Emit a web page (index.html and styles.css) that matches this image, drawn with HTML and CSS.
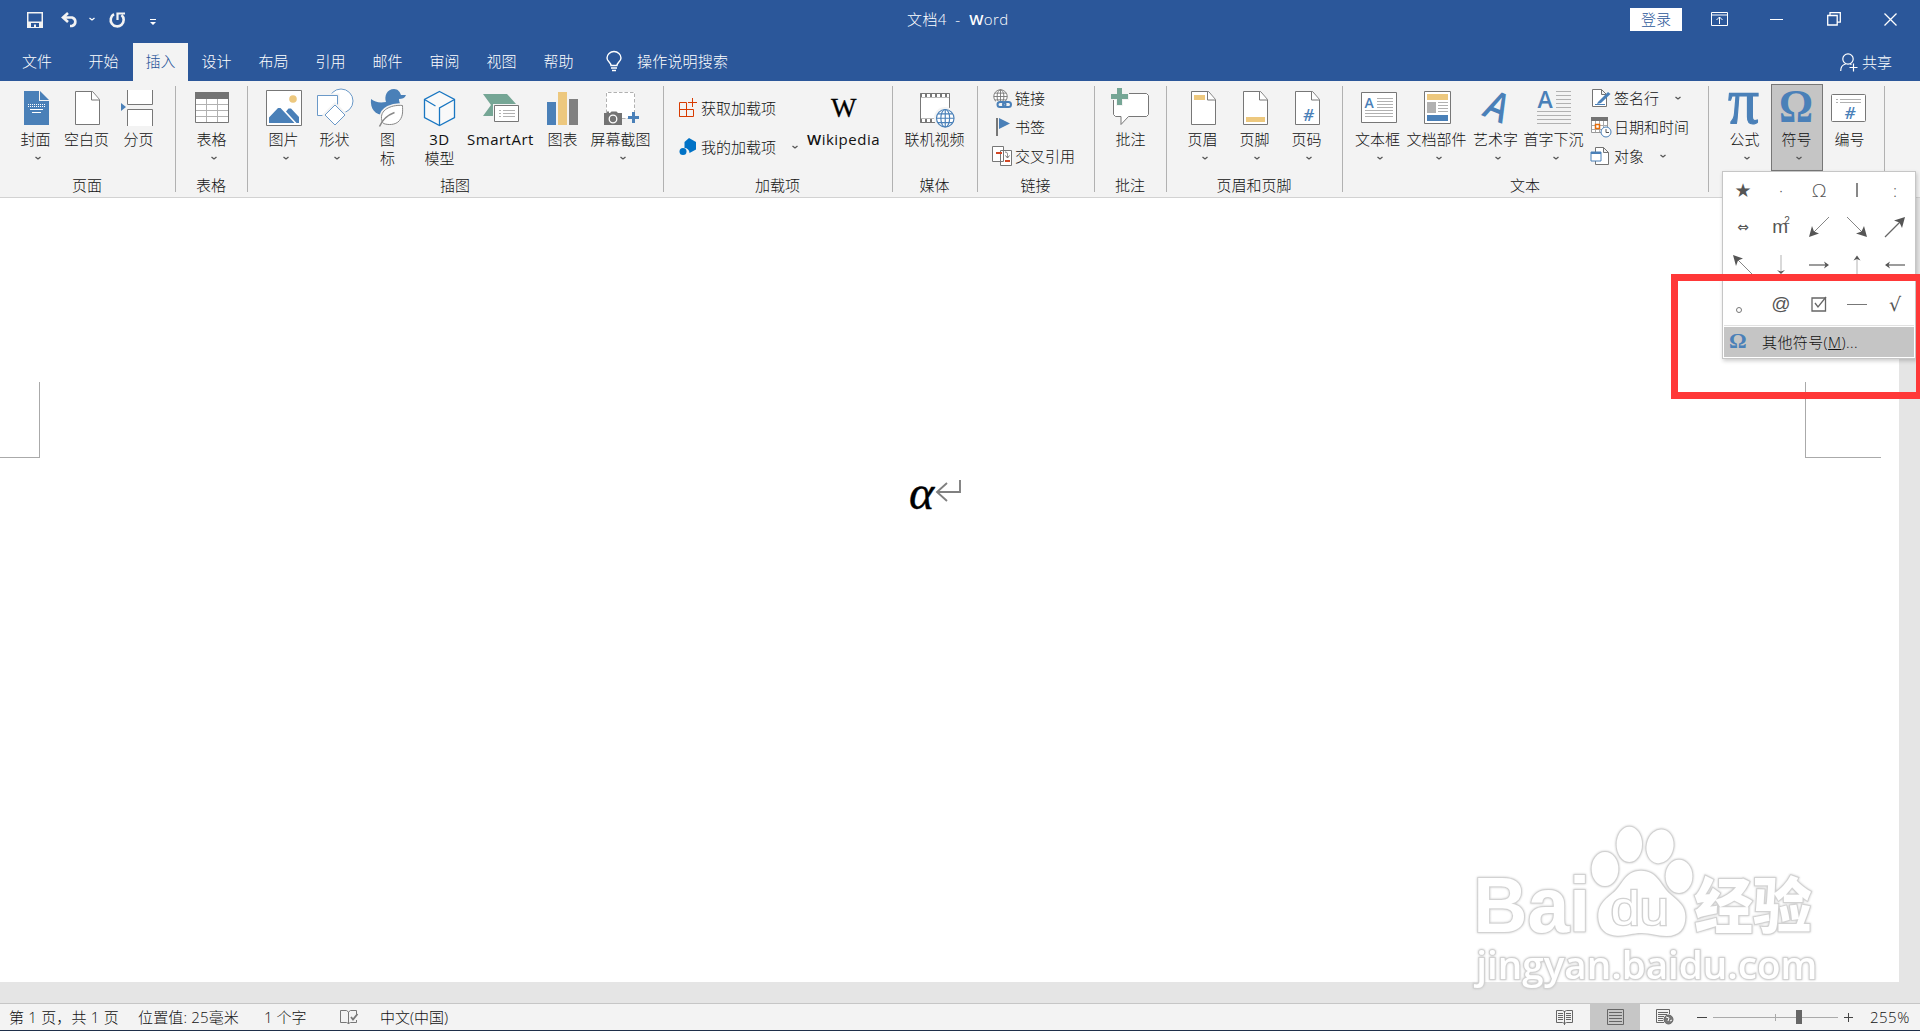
FILE: index.html
```html
<!DOCTYPE html>
<html lang="zh-CN">
<head>
    <meta charset="UTF-8">
    <meta name="viewport" content="width=device-width, initial-scale=1.0">
    <title>文档4 - Word</title>
    <link rel="stylesheet" href="styles.css">
</head>
<body>
    <!-- shared shapes -->
    <svg class="defs">
        <symbol id="chev" viewBox="0 0 8 5"><path d="M1.500 1l2.500 2L6.500 1" fill="none" stroke="currentColor" stroke-width="1.300"/></symbol>
        <symbol id="page" viewBox="0 0 40 42"><path d="M8.500 3.500h17l7 8v25h-24z" fill="#fff" stroke="#777"/><path d="M24.500 3.500v8.500h8" fill="#fff" stroke="#777"/></symbol>
        <symbol id="globe" viewBox="0 0 20 20"><circle cx="10" cy="10" r="9" fill="#fff"/><g fill="none" stroke="currentColor" stroke-width="1.2"><circle cx="10" cy="10" r="9"/><ellipse cx="10" cy="10" rx="4.500" ry="9"/><path d="M10 1v18M1 10h18M2.500 5.500h15M2.500 14.500h15"/></g></symbol>
    </svg>

    <div class="titlebar">
        <div class="quick">
            <svg class="q-save" width="16" height="16" viewBox="0 0 16 16"><path d="M0 0h16v16H0z" fill="#f3f3f3"/><path d="M1.500 1.500h13v8h-13zM4 11h8v4H9v-2.500H7V15H4z" fill="#2b579a"/></svg>
            <svg class="q-undo" width="18" height="16" viewBox="0 0 18 16"><path d="M2 5.500h9a5 4.500 0 0 1 0 8.500H9M7 1L2 5.500 7 10" fill="none" stroke="#f3f3f3" stroke-width="2.600"/></svg>
            <svg class="q-chev" width="8" height="5"><use href="#chev"/></svg>
            <svg class="q-redo" width="17" height="16" viewBox="0 0 17 16"><path d="M5 2.200A6.500 6.500 0 1 0 12.500 3" fill="none" stroke="#f3f3f3" stroke-width="2.600"/><path d="M8.500 8V1.500H16" fill="none" stroke="#f3f3f3" stroke-width="2.200"/></svg>
            <svg class="q-more" width="6" height="7" viewBox="0 0 6 7"><path d="M0 0h6v1H0zM0 3h6L3 6z" fill="#fff"/></svg>
        </div>
        <div class="title">文档4&nbsp; -&nbsp; <b>W</b>ord</div>
        <div class="winctl">
            <span class="login">登录</span>
            <svg class="w-opts" width="17" height="14" viewBox="0 0 17 14" fill="none" stroke="#fff"><path d="M.5.5h16v13H.5zM.5 3h16M8.500 12V5M5.500 8l3-3 3 3"/></svg>
            <svg class="w-min" width="13" height="14" viewBox="0 0 13 14"><path d="M0 7.500h13" stroke="#fff"/></svg>
            <svg class="w-max" width="14" height="14" viewBox="0 0 14 14" fill="none" stroke="#fff" stroke-width="1.300"><path d="M.7 3.500h9.500v9.500H.7zM3 3.500V.7h10.300v9.500h-3"/></svg>
            <svg class="w-close" width="13" height="13" viewBox="0 0 13 13"><path d="M.5.5l12 12M12.500.5l-12 12" stroke="#fff" stroke-width="1.300"/></svg>
        </div>
    </div>

    <div class="tabs">
        <span class="tab file">文件</span>
        <span class="tab home">开始</span>
        <span class="tab active">插入</span>
        <span class="tab">设计</span>
        <span class="tab">布局</span>
        <span class="tab">引用</span>
        <span class="tab">邮件</span>
        <span class="tab">审阅</span>
        <span class="tab">视图</span>
        <span class="tab">帮助</span>
        <svg class="bulb" width="16" height="21" viewBox="0 0 16 21" fill="none" stroke="#fff" stroke-width="1.400"><path d="M5 14.500c0-3-4-4-4-7.500a7 6.500 0 0 1 14 0c0 3.500-4 4.500-4 7.500zM5 17h6M6 19.500h4"/></svg>
        <span class="tell">操作说明搜索</span>
        <span class="share"><svg width="18" height="19" viewBox="0 0 18 19" fill="none" stroke="#fff" stroke-width="1.200"><circle cx="8" cy="6" r="5.200"/><path d="M.7 18c0-4 2.500-6.500 5-7M10 11l1.500.5M13.500 10.500v8M9.500 14.500h8"/></svg>共享</span>
    </div>

    <div class="ribbon">
        <div class="group g-pages">
            <div class="body">
                <div class="btn w44">
                    <svg class="ico" viewBox="0 0 40 42"><path d="M8 3h15v10h10v24H8z" fill="#4a80b8"/><path d="M24 3l9 9h-9z" fill="#4a80b8"/><path d="M12 16.500h17M12 18.500h17" stroke="#fff" stroke-dasharray="1 1"/><path d="M14 21.500h13M16 24.500h9" stroke="#fff"/></svg>
                    <span>封面</span><svg class="chev"><use href="#chev"/></svg>
                </div>
                <div class="btn w58"><svg class="ico"><use href="#page"/></svg><span>空白页</span></div>
                <div class="btn w46">
                    <svg class="ico" viewBox="0 0 40 42"><path d="M8.500 2v14.500h25V2M8.500 38V21.500h25V38" fill="#fff" stroke="#777"/><path d="M2 15l5 4-5 4z" fill="#4a80b8"/></svg>
                    <span>分页</span>
                </div>
            </div>
            <div class="name">页面</div>
        </div>

        <div class="group g-table">
            <div class="body">
                <div class="btn w44">
                    <svg class="ico" viewBox="0 0 40 42"><path d="M3.500 4.500h33v30h-33z" fill="#fff" stroke="#777"/><path d="M4 16.500h32M4 22.500h32M4 28.500h32M14.500 11v23M25.500 11v23" stroke="#b1b1b1"/><path d="M3 4h34v7H3z" fill="#737373"/></svg>
                    <span>表格</span><svg class="chev"><use href="#chev"/></svg>
                </div>
            </div>
            <div class="name">表格</div>
        </div>

        <div class="group g-illus">
            <div class="body">
                <div class="btn w50">
                    <svg class="ico" viewBox="0 0 40 42"><path d="M2.500 2.500h35v35h-35z" fill="#fff" stroke="#777"/><circle cx="29" cy="11" r="3.800" fill="#edc87e"/><path d="M5 35v-5.500l9-9.500h2.500L30.500 35zM22 23.500l2.500-3H27l8 8.500v6h-2.500z" fill="#4a80b8"/></svg>
                    <span>图片</span><svg class="chev"><use href="#chev"/></svg>
                </div>
                <div class="btn w52">
                    <svg class="ico" viewBox="0 0 40 42" fill="#fff" stroke="#6b99c8"><circle cx="26" cy="13" r="12"/><path d="M2.500 7.500h20v20h-20z" stroke="#f3f3f3" stroke-width="4"/><path d="M2.500 7.500h20v20h-20z"/><path d="M20 16l11 11-11 11L9 27z" stroke="#f3f3f3" stroke-width="3"/><path d="M20 17l10 10-10 10L10 27z"/></svg>
                    <span>形状</span><svg class="chev"><use href="#chev"/></svg>
                </div>
                <div class="btn w54">
                    <svg class="ico" viewBox="0 0 40 42"><path d="M3 11c4 3 8 4 15 3-2-6 1-13 8-13 4 0 6 3 7 6h5c-1 3-4 4-7 4 0 4 2 4 1 8-2 7-9 9-15 8.500C7 27 2 21 3 11z" fill="#4a80b8"/><path d="M34.500 17.500c-9-1-22 3-21 13 .2 2 1 4 2 5 4 1.500 12 2 16-3 4-5 3-10 3-15z" fill="#fff" stroke="#f3f3f3" stroke-width="4"/><path d="M34.500 17.500c-9-1-22 3-21 13 .2 2 1 4 2 5 4 1.500 12 2 16-3 4-5 3-10 3-15z" fill="#fff" stroke="#888"/><path d="M11.500 38.500c2-5 7-11 15-14" fill="none" stroke="#888" stroke-width="1.500"/></svg>
                    <span>图</span><span>标</span>
                </div>
                <div class="btn w50">
                    <svg class="ico" viewBox="0 0 40 42" fill="none" stroke="#1a77c2" stroke-width="1.300"><path d="M19.500 3.500l15 8v18l-15 8-15-8v-18z" fill="#f9f9f9"/><path d="M4.500 11.500l11 6.500M34.500 11.500l-15 8.500v17"/></svg>
                    <span class="latin">3D</span><span>模型</span>
                </div>
                <div class="btn w72">
                    <svg class="ico" viewBox="0 0 40 42"><path d="M2 6h24l9 10H12v12H2l8-11z" fill="#75a695"/><path d="M13.500 17.500h24v16h-24z" fill="#fff" stroke="#777"/><path d="M18 22.500h2M18 25.500h2M18 28.500h2M22 22.500h12M22 25.500h12M22 28.500h12" stroke="#b1b1b1"/></svg>
                    <span class="latin">SmartArt</span>
                </div>
                <div class="btn w52">
                    <svg class="ico" viewBox="0 0 40 42"><path d="M4 14h9v23H4z" fill="#4a80b8"/><path d="M15 4h9v33h-9z" fill="#edc87e"/><path d="M26 11h9v26h-9z" fill="#808080"/></svg>
                    <span>图表</span>
                </div>
                <div class="btn w64">
                    <svg class="ico" viewBox="0 0 40 42"><path d="M5 4h29v26H5z" fill="#fff"/><path d="M5.500 25V4.500h28V24M21 30.500h6" fill="none" stroke="#b1b1b1" stroke-dasharray="3.500 2"/><path d="M3 25h3v-1.500h2V25h1l1.500-1.500h5L17 25h4v12H3z" fill="#737373"/><circle cx="12" cy="31" r="3.800" fill="none" stroke="#fff" stroke-width="1.300"/><path d="M31 24h3v4h4v3h-4v4h-3v-4h-4v-3h4z" fill="#4a80b8"/></svg>
                    <span>屏幕截图</span><svg class="chev"><use href="#chev"/></svg>
                </div>
            </div>
            <div class="name">插图</div>
        </div>

        <div class="group g-addins">
            <div class="body">
                <div class="rows tall">
                    <div class="row"><svg class="sico" viewBox="0 0 20 20" fill="none" stroke="#d83b01"><path d="M1.500 3.500h7v14h-7zM1.500 10.500h14v7h-14M8.500 10.500h-7M14.500-1v9M10 3.500h9"/></svg><span>获取加载项</span></div>
                    <div class="row"><svg class="sico" viewBox="0 0 20 20" fill="#0072c6"><path d="M11 0l7 4v7.500L11.500 15a5 5 0 0 0-5-5V4z"/><circle cx="5" cy="13.500" r="3.500"/></svg><span>我的加载项</span><svg class="chev end"><use href="#chev"/></svg></div>
                </div>
                <div class="btn w78">
                    <svg class="ico" viewBox="0 0 40 42"><text x="7" y="29" class="wiki">W</text></svg>
                    <span class="latin"><b>W</b>ikipedia</span>
                </div>
            </div>
            <div class="name">加载项</div>
        </div>

        <div class="group g-media">
            <div class="body">
                <div class="btn w70">
                    <svg class="ico" viewBox="0 0 40 42"><path d="M5.500 5.500h29v29h-29z" fill="#fff" stroke="#777"/><path d="M5 7.500h30M5 32.500h30" stroke="#777" stroke-width="4"/><path d="M7 7.500h27M7 32.500h15" stroke="#fff" stroke-width="3" stroke-dasharray="3 2"/><circle cx="30" cy="30" r="11" fill="#f3f3f3"/><svg x="20.500" y="20.500" width="19.500" height="19.500" color="#4a80b8"><use href="#globe"/></svg></svg>
                    <span>联机视频</span>
                </div>
            </div>
            <div class="name">媒体</div>
        </div>

        <div class="group g-links">
            <div class="body">
                <div class="rows">
                    <div class="row"><svg class="sico" viewBox="0 0 20 20"><svg x="1" y="0" width="15" height="15" color="#777"><use href="#globe"/></svg><path d="M4 12h16v8H4z" fill="#f3f3f3"/><g fill="none" stroke="#4a80b8" stroke-width="2"><rect x="5.500" y="13" width="8" height="5" rx="2.500"/><rect x="11" y="13" width="8" height="5" rx="2.500"/></g></svg><span>链接</span></div>
                    <div class="row"><svg class="sico" viewBox="0 0 20 20"><path d="M4 0h2v18H4z" fill="#777"/><path d="M7 0l11 5.500L7 11z" fill="#4a80b8"/></svg><span>书签</span></div>
                    <div class="row"><svg class="sico" viewBox="0 0 20 20" fill="#fff" stroke="#777"><path d="M8.500 3.500h11v15h-11zM.5-.5h11v15H.5z"/><path d="M13 5c3 0 2.500 2 2.500 6M13.500 8.500l2 2.500 2-2.500" fill="none"/><path d="M4 6h6M13 14h5" stroke="#d24726" stroke-width="2"/></svg><span>交叉引用</span></div>
                </div>
            </div>
            <div class="name">链接</div>
        </div>

        <div class="group g-comment">
            <div class="body">
                <div class="btn w60">
                    <svg class="ico" viewBox="0 0 40 42"><path d="M4.500 5.500h31l2 2v19l-2 2h-18l-7.500 8v-8H4.500l-2-2v-19z" fill="#fff" stroke="#777"/><path d="M5-1h7v6h6v7h-6v6H5v-6h-6V5h6z" fill="#f3f3f3"/><path d="M6 0h5v6h6v5h-6v6H6v-6H0V6h6z" fill="#75a695"/></svg>
                    <span>批注</span>
                </div>
            </div>
            <div class="name">批注</div>
        </div>

        <div class="group g-header">
            <div class="body">
                <div class="btn w52"><svg class="ico" viewBox="0 0 40 42"><use href="#page"/><path d="M11 7h11v5H11z" fill="#edc87e"/></svg><span>页眉</span><svg class="chev"><use href="#chev"/></svg></div>
                <div class="btn w52"><svg class="ico" viewBox="0 0 40 42"><use href="#page"/><path d="M11 29h19v5H11z" fill="#edc87e"/></svg><span>页脚</span><svg class="chev"><use href="#chev"/></svg></div>
                <div class="btn w52"><svg class="ico" viewBox="0 0 40 42"><use href="#page"/><text x="16" y="33" class="hash">#</text></svg><span>页码</span><svg class="chev"><use href="#chev"/></svg></div>
            </div>
            <div class="name">页眉和页脚</div>
        </div>

        <div class="group g-text">
            <div class="body">
                <div class="btn w50">
                    <svg class="ico" viewBox="0 0 40 42"><path d="M3.500 4.500h35v30h-35z" fill="#fff" stroke="#777"/><path d="M19 10.500h16M19 13.500h16M19 16.500h16M19 19.500h16M7 22.500h28M7 25.500h28M7 28.500h28" stroke="#b1b1b1"/><text x="6.500" y="20" class="bluea" font-size="14">A</text></svg>
                    <span>文本框</span><svg class="chev"><use href="#chev"/></svg>
                </div>
                <div class="btn w68">
                    <svg class="ico" viewBox="0 0 40 42"><path d="M7.500 3.500h26v32h-26z" fill="#fff" stroke="#777"/><path d="M10 6h21v6H10z" fill="#edc87e"/><path d="M10 14h9v11h-9z" fill="#b1b1b1"/><path d="M21 14.500h10M21 17.500h10M21 20.500h10M21 23.500h10" stroke="#b1b1b1"/><path d="M10 27h21v6H10z" fill="#4a80b8"/></svg>
                    <span>文档部件</span><svg class="chev"><use href="#chev"/></svg>
                </div>
                <div class="btn w50">
                    <svg class="ico" viewBox="0 0 40 42"><text x="0" y="0" class="bluea" font-size="37" transform="matrix(.86 .36 -.46 .98 5 27)">A</text></svg>
                    <span>艺术字</span><svg class="chev"><use href="#chev"/></svg>
                </div>
                <div class="btn w66">
                    <svg class="ico" viewBox="0 0 40 42"><path d="M22 3.500h15M22 7.500h15M22 11.500h15M22 15.500h15M22 19.500h15M3 23.500h34M3 27.500h34M3 31.500h34M3 35.500h34" stroke="#b1b1b1"/><text x="3.500" y="20" class="bluea" font-size="23">A</text></svg>
                    <span>首字下沉</span><svg class="chev"><use href="#chev"/></svg>
                </div>
                <div class="rows text-rows">
                    <div class="row"><svg class="sico" viewBox="0 0 20 20"><path d="M1.500.5h9l5 5v12h-14zM10.500.5v5h5" fill="#fff" stroke="#737373"/><path d="M7 13L17 3l2.500 2L10 14l-4 1z" fill="#4a80b8"/><path d="M4 15.500h10" stroke="#4a80b8"/></svg><span>签名行</span><svg class="chev end"><use href="#chev"/></svg></div>
                    <div class="row"><svg class="sico" viewBox="0 0 20 20"><path d="M.5.5h16v14H.5z" fill="#fff" stroke="#999"/><path d="M4.500 3v11M8.500 3v11M12.500 3v11M1 7.500h15M1 11.500h15" stroke="#aaa"/><path d="M0-1h17v4H0z" fill="#737373"/><path d="M4.500 6.500h4v4h-4z" fill="#fff" stroke="#e46c0a" stroke-width="1.500"/><circle cx="15" cy="14" r="5" fill="#fff" stroke="#4a80b8"/><path d="M15 11v3.500h3" fill="none" stroke="#555"/></svg><span>日期和时间</span></div>
                    <div class="row"><svg class="sico" viewBox="0 0 20 20"><path d="M4.500.5h8l5 5v12h-13zM12.500.5v5h5" fill="#fff" stroke="#737373"/><path d="M0 5h10v9H0z" fill="#fff" stroke="#4a80b8"/><path d="M0 6h10" stroke="#4a80b8" stroke-width="2"/></svg><span>对象</span><svg class="chev end"><use href="#chev"/></svg></div>
                </div>
            </div>
            <div class="name">文本</div>
        </div>

        <div class="group g-symbols">
            <div class="body">
                <div class="btn w52"><svg class="ico" viewBox="0 0 40 42"><text x="3" y="34.500" class="sym pi" font-size="65" textLength="31" lengthAdjust="spacingAndGlyphs">π</text></svg><span>公式</span><svg class="chev"><use href="#chev"/></svg></div>
                <div class="btn w52 pressed"><svg class="ico" viewBox="0 0 40 42"><text x="2" y="34" class="sym" font-size="47" textLength="34" lengthAdjust="spacingAndGlyphs">Ω</text></svg><span>符号</span><svg class="chev"><use href="#chev"/></svg></div>
                <div class="btn w54"><svg class="ico" viewBox="0 0 40 42"><rect x="1.500" y="6.500" width="34" height="27" rx="1" fill="#fff" stroke="#777"/><path d="M6 11.500h2M10 11.500h21M6 14.500h2M10 14.500h21" stroke="#b1b1b1"/><text x="14.500" y="31" class="hash">#</text></svg><span>编号</span></div>
            </div>
        </div>
    </div>

    <div class="doc">
        <div class="sheet">
            <span class="crop crop-l"></span>
            <span class="crop crop-r"></span>
            <div class="line"><i>α</i><svg width="26" height="23" viewBox="0 0 26 23"><path d="M24 0v12H1M11 3L1 12l10 9" fill="none" stroke="#808080" stroke-width="1.900"/></svg></div>
        </div>
        <svg class="mark" viewBox="0 0 1200 600">
            <g class="logo">
                <text x="100" y="397" class="bai" textLength="350" lengthAdjust="spacingAndGlyphs">Bai</text>
                <ellipse cx="495" cy="207" rx="40" ry="51"/>
                <ellipse cx="568" cy="133" rx="38" ry="53"/>
                <ellipse cx="660" cy="139" rx="40" ry="51" transform="rotate(12 660 139)"/>
                <ellipse cx="717" cy="229" rx="40" ry="50"/>
                <path d="M603 212c-50 0-55 45-85 68-30 24-44 40-43 72 2 36 24 56 60 55 30 0 40-8 70-8s45 9 75 9c38-1 56-22 56-58 0-32-20-45-46-68-28-24-37-70-87-70z"/>
                <text x="512" y="375" class="du" textLength="174" lengthAdjust="spacingAndGlyphs">du</text>
                <text x="763" y="385" class="jy" textLength="352" lengthAdjust="spacingAndGlyphs">经验</text>
                <text x="109" y="537" class="url" textLength="1023" lengthAdjust="spacingAndGlyphs">jingyan.baidu.com</text>
            </g>
        </svg>
    </div>

    <div class="status">
        <span class="s-page">第 1 页，共 1 页</span>
        <span class="s-pos">位置值: 25毫米</span>
        <span class="s-words">1 个字</span>
        <svg class="s-proof" width="18" height="16" viewBox="0 0 18 16" fill="none" stroke="#777"><path d="M8.500 14.500l-2-1H.5v-12h6l2 1.500 2-1.500h6V5M8.500 3v12M8.500 14.500l2-1h6V11"/><path d="M11 8l2 2.500L17.500 5" stroke-width="1.800"/></svg>
        <span>中文(中国)</span>
        <div class="views">
            <span class="view"><svg width="18" height="16" viewBox="0 0 18 16" fill="none" stroke="#666"><path d="M8.500 14.500l-2-1H.5v-12h6l2 1 2-1h6v12h-6zM8.500 2v14M2 4.500h5M2 6.500h5M2 8.500h5M2 10.500h5M10 4.500h5M10 6.500h5M10 8.500h5M10 10.500h5"/></svg></span>
            <span class="view on"><svg width="17" height="16" viewBox="0 0 17 16" fill="none" stroke="#666"><path d="M.5.5h16v15H.5zM2 3.500h13M2 6.500h13M2 9.500h13M2 12.500h13"/></svg></span>
            <span class="view"><svg width="18" height="16" viewBox="0 0 18 16" fill="none" stroke="#666"><path d="M8 13.500H.5V.5h13V5M2 3.500h10M2 5.500h9M2 7.500h6M2 9.500h5M2 11.500h5"/><circle cx="12.500" cy="10.500" r="4.500" fill="#777"/><path d="M10 8l3 1-1 3M14 12l2-1" stroke="#fff"/></svg></span>
        </div>
        <div class="zoom">
            <i class="minus"></i>
            <div class="track"><i class="tick"></i><i class="thumb"></i></div>
            <i class="plus"></i>
            <span>255%</span>
        </div>
    </div>

    <div class="menu">
        <div class="grid">
            <span class="star">★</span><span>·</span><span class="thin">Ω</span><span><i class="bar"></i></span><span>:</span>
            <span class="tiny">⇔</span>
            <span class="m2">m<sup>2</sup></span>
            <span><svg class="arr" viewBox="0 0 20 20"><path d="M20 0L4 16" stroke-width=".8"/><path d="M0 20l3-11 2 5.500 5 2z" class="tip"/></svg></span>
            <span><svg class="arr" viewBox="0 0 20 20"><path d="M0 0l16 16" stroke-width=".8"/><path d="M20 20L9 16.500l5.500-2L17 9z" class="tip"/></svg></span>
            <span><svg class="arr" viewBox="0 0 20 20"><path d="M0 20L16 4" stroke-width="1.300"/><path d="M20 0L9 3.500l5.500 2L17 11z" class="tip"/></svg></span>
            <span><svg class="arr" viewBox="0 0 20 20"><path d="M20 20L4 4" stroke-width=".8"/><path d="M0 0l3 11 2-5.500 5-2z" class="tip"/></svg></span>
            <span><svg class="arr" viewBox="0 0 20 20"><path d="M10 0v18" stroke="#ccc" stroke-width="1.500"/><path d="M10 19l-4-4 4 1.500 4-1.500z" class="tip"/></svg></span>
            <span><svg class="arr" viewBox="0 0 20 20"><path d="M0 10h18" stroke-width="1.300"/><path d="M20 10l-5-3.500 1.500 3.500-1.500 3.500z" class="tip"/></svg></span>
            <span><svg class="arr" viewBox="0 0 20 20"><path d="M10 2v18" stroke="#ccc" stroke-width="1.500"/><path d="M10 .5l-3.500 5L10 4l3.500 1.500z" class="tip"/></svg></span>
            <span><svg class="arr" viewBox="0 0 20 20"><path d="M2 10h18" stroke-width="1.300"/><path d="M0 10l5-3.500L3.500 10 5 13.500z" class="tip"/></svg></span>
            <span class="ring"><i></i></span>
            <span class="at">@</span>
            <span><svg width="16" height="16" viewBox="0 0 16 16" fill="none" stroke="#666"><path d="M1 2h13.500v13H1z" stroke-width="1.300"/><path d="M4 7l3 4 8-10" stroke-width="1.300"/></svg></span>
            <span><i class="dash"></i></span>
            <span class="root">√</span>
        </div>
        <div class="more"><b>Ω</b>其他符号(<u>M</u>)...</div>
    </div>
    <div class="callout"></div>
</body>
</html>
```
FILE: styles.css
```css
* {
    box-sizing: border-box;
}
body {
    margin: 0;
    width: 1920px;
    height: 1031px;
    overflow: hidden;
    position: relative;
    display: flex;
    flex-direction: column;
    font-family: "Open Sans", "Noto Sans CJK SC", sans-serif;
    font-size: 15px;
    font-weight: 300;
    color: #111;
    background-color: #f3f3f3;
}
svg {
    display: block;
    flex: none;
    overflow: visible;
}
.defs {
    position: absolute;
    width: 0;
    height: 0;
}

/* title bar */
.titlebar {
    height: 43px;
    flex: none;
    display: flex;
    background-color: #2b579a;
    color: #fff;
}
.quick {
    width: 907px;
    display: flex;
    padding: 12px 0 0 27px;
}
.q-undo {
    margin-left: 18px;
}
.q-chev {
    margin: 5px 0 0 9px;
}
.q-redo {
    margin-left: 13px;
}
.q-more {
    margin: 7px 0 0 24px;
}
.title {
    width: 723px;
    line-height: 38px;
    white-space: nowrap;
    letter-spacing: 0.4px;
}
.title b, .latin b {
    font-weight: 600;
}
.winctl {
    display: flex;
    align-items: flex-start;
}
.login {
    width: 52px;
    height: 23px;
    margin-top: 8px;
    background-color: #fff;
    color: #2b579a;
    text-align: center;
    line-height: 23px;
}
.w-opts {
    margin: 12px 0 0 29px;
}
.w-min {
    margin: 12px 0 0 42px;
}
.w-max {
    margin: 12px 0 0 44px;
}
.w-close {
    margin: 13px 0 0 43px;
}

/* tabs */
.tabs {
    height: 38px;
    flex: none;
    display: flex;
    background-color: #2b579a;
    color: #fff;
    line-height: 36px;
}
.tab {
    width: 57px;
    text-align: center;
}
.tab.file {
    width: 74px;
}
.tab.home {
    width: 59px;
}
.tab.active {
    width: 55px;
    background-color: #f3f3f3;
    color: #2b579a;
}
.bulb {
    margin: 8px 0 0 19px;
}
.tell {
    margin-left: 15px;
    letter-spacing: 0.2px;
}
.share {
    display: flex;
    gap: 4px;
    margin: 1px 28px 0 auto;
}
.share svg {
    margin-top: 9px;
}

/* ribbon */
.ribbon {
    height: 117px;
    flex: none;
    display: flex;
    padding-top: 5px;
    border-bottom: 1px solid #d2d2d2;
}
.group {
    height: 106px;
    border-right: 1px solid #b1b1b1;
    display: flex;
    flex-direction: column;
    justify-content: space-between;
}
.body {
    display: flex;
    padding-top: 2px;
}
.name {
    height: 19px;
    line-height: 19px;
    margin-bottom: -3px;
    padding-right: 1px;
    text-align: center;
}
.g-pages { width: 176px; }
.g-table { width: 72px; }
.g-illus { width: 416px; }
.g-addins { width: 229px; }
.g-media { width: 85px; }
.g-links { width: 117px; }
.g-comment { width: 72px; }
.g-header { width: 176px; }
.g-text { width: 366px; }
.g-symbols { width: 176px; }
.g-pages .body, .g-table .body, .g-addins .body, .g-links .body { padding-left: 14px; }
.g-illus .body { padding-left: 11px; }
.g-media .body { padding-left: 7px; }
.g-comment .body { padding-left: 6px; }
.g-header .body, .g-text .body, .g-symbols .body { padding-left: 10px; }

.btn {
    display: flex;
    flex-direction: column;
    align-items: center;
    white-space: nowrap;
    line-height: 19px;
}
.btn span {
    height: 19px;
    padding-right: 1px;
}
.btn .latin {
    font-weight: 400;
    letter-spacing: 0.5px;
}
.w44 { width: 44px; }
.w46 { width: 46px; }
.w50 { width: 50px; }
.w52 { width: 52px; }
.w54 { width: 54px; }
.w58 { width: 58px; }
.w60 { width: 60px; }
.w64 { width: 64px; }
.w66 { width: 66px; }
.w68 { width: 68px; }
.w70 { width: 70px; }
.w72 { width: 72px; }
.w78 { width: 78px; }
.ico {
    width: 40px;
    height: 42px;
}
.chev {
    width: 8px;
    height: 5px;
    margin: 7px 0 0 4px;
    color: #555;
}
.pressed {
    height: 87px;
    margin-top: -4px;
    padding-top: 3px;
    background-color: #c5c5c5;
    border: 1px solid #777;
}
.rows {
    margin-top: -4px;
}
.rows.tall {
    width: 127px;
    margin-top: 1px;
}
.row {
    height: 29px;
    display: flex;
    align-items: center;
    white-space: nowrap;
}
.row span {
    margin-top: -2px;
}
.tall .row {
    height: 39px;
}
.sico {
    width: 20px;
    height: 20px;
    margin-right: 3px;
}
.text-rows {
    margin-left: 4px;
}
.chev.end {
    margin: 0 0 0 15px;
}
.wiki {
    font: 400 27px "Liberation Serif", serif;
    fill: #000;
    stroke: #000;
    stroke-width: 0.3px;
}
.hash {
    font: italic 600 17px "Open Sans", sans-serif;
    fill: #4a80b8;
}
.bluea {
    font-family: "Open Sans", sans-serif;
    font-weight: 600;
    fill: #4a80b8;
}
.sym {
    font-family: "Liberation Serif", serif;
    font-weight: 700;
    fill: #4a80b8;
}
.sym.pi {
    font-weight: 400;
    stroke: #4a80b8;
    stroke-width: 1.2px;
}

/* document area */
.doc {
    flex: 1;
    position: relative;
    background-color: #e5e5e5;
}
.sheet {
    width: 1899px;
    height: 784px;
    background-color: #fff;
    padding-top: 265px;
}
.crop {
    position: absolute;
    top: 184px;
    height: 76px;
    border-bottom: 1px solid #aaa;
}
.crop-l {
    left: 0;
    width: 40px;
    border-right: 1px solid #aaa;
}
.crop-r {
    left: 1805px;
    width: 76px;
    border-left: 1px solid #aaa;
}
.line {
    display: flex;
    padding-left: 909px;
    color: #000;
    font: 48px/60px "Liberation Serif", serif;
    -webkit-text-stroke: 0.4px #000;
}
.line svg {
    margin: 17px 0 0 2px;
}
.mark {
    position: absolute;
    left: 1440px;
    top: 602px;
    width: 400px;
    height: 200px;
}
.logo {
    fill: #fff;
    stroke: #d2d2d2;
    stroke-width: 6px;
    paint-order: stroke;
    filter: drop-shadow(0 0 3px #c4c4c4);
}
.bai {
    font: 700 232px "Liberation Sans", sans-serif;
}
.du {
    font: 400 145px "Liberation Sans", sans-serif;
    stroke-width: 8px;
}
.jy {
    font: 900 180px "Noto Sans CJK SC", sans-serif;
}
.url {
    font: 600 112px "Open Sans", sans-serif;
}

/* status bar */
.status {
    height: 28px;
    flex: none;
    display: flex;
    border-top: 1px solid #c6c6c6;
    border-bottom: 1px solid #1f2f4a;
    line-height: 26px;
    padding-left: 9px;
    white-space: nowrap;
}
.s-page {
    width: 129px;
    letter-spacing: 0.2px;
}
.s-pos {
    width: 126px;
    letter-spacing: 0.15px;
}
.s-words {
    width: 76px;
}
.s-proof {
    margin: 5px 22px 0 0;
}
.views {
    display: flex;
    margin-left: auto;
}
.view {
    width: 50px;
    display: flex;
    align-items: center;
    justify-content: center;
}
.view.on {
    background-color: #c6c6c6;
}
.zoom {
    width: 230px;
    display: flex;
    align-items: center;
    padding-left: 7px;
}
.minus {
    width: 10px;
    height: 1px;
    background-color: #444;
}
.track {
    width: 125px;
    height: 14px;
    margin: 0 6px;
    position: relative;
    background: linear-gradient(#aaa, #aaa) 0 7px / 125px 1px no-repeat;
}
.tick, .thumb {
    position: absolute;
}
.tick {
    left: 62px;
    top: 4px;
    width: 1px;
    height: 7px;
    background-color: #aaa;
}
.thumb {
    left: 83px;
    top: 0;
    width: 6px;
    height: 14px;
    background-color: #666;
}
.plus {
    width: 9px;
    height: 9px;
    background: linear-gradient(#444, #444) 4px 0 / 1px 9px no-repeat, linear-gradient(#444, #444) 0 4px / 9px 1px no-repeat;
}
.zoom span {
    margin-left: 17px;
    letter-spacing: 0.5px;
}

/* symbol drop-down */
.menu {
    position: absolute;
    left: 1722px;
    top: 171px;
    width: 194px;
    height: 188px;
    padding: 0 1px 1px;
    background-color: #fff;
    border: 1px solid #c6c6c6;
    box-shadow: 1px 2px 4px rgba(0, 0, 0, 0.2);
}
.grid {
    height: 154px;
    display: grid;
    grid-template-columns: repeat(5, 38px);
    grid-template-rows: 36px 38px 38px 40px;
    border-bottom: 1px solid #e1e1e1;
    color: #555;
    font-size: 17px;
}
.grid > span {
    display: flex;
    align-items: center;
    justify-content: center;
}
.arr {
    width: 20px;
    height: 20px;
    stroke: #666;
    fill: none;
}
.arr .tip {
    fill: #555;
    stroke: none;
}
.star {
    font: 19px "DejaVu Sans", sans-serif;
    color: #555;
}
.thin {
    font-size: 19px;
}
.tiny {
    font: 14px "DejaVu Sans", sans-serif;
}
.bar {
    width: 2px;
    height: 14px;
    background-color: #888;
}
.dash {
    width: 20px;
    height: 1px;
    background-color: #777;
}
.m2 {
    font: 19px "Liberation Sans", sans-serif;
}
.m2 sup {
    font-size: 10px;
    align-self: flex-start;
    margin: 7px 0 0 -4px;
}
.ring i {
    width: 6px;
    height: 6px;
    margin: 12px 9px 0 0;
    border: 1px solid #777;
    border-radius: 50%;
}
.at {
    font: 19px "Liberation Sans", sans-serif;
}
.root {
    font: 19px "DejaVu Sans", sans-serif;
}
.more {
    height: 30px;
    margin-top: 1px;
    display: flex;
    background-color: #c5c5c5;
    line-height: 30px;
    letter-spacing: 0.4px;
}
.more b {
    width: 38px;
    padding-left: 5px;
    font: 700 22px/27px "Liberation Serif", serif;
    color: #4a80b8;
}

/* red highlight box */
.callout {
    position: absolute;
    left: 1671px;
    top: 274px;
    width: 249px;
    height: 125px;
    border: 7px solid #ff3838;
    border-right-width: 4px;
}
```
